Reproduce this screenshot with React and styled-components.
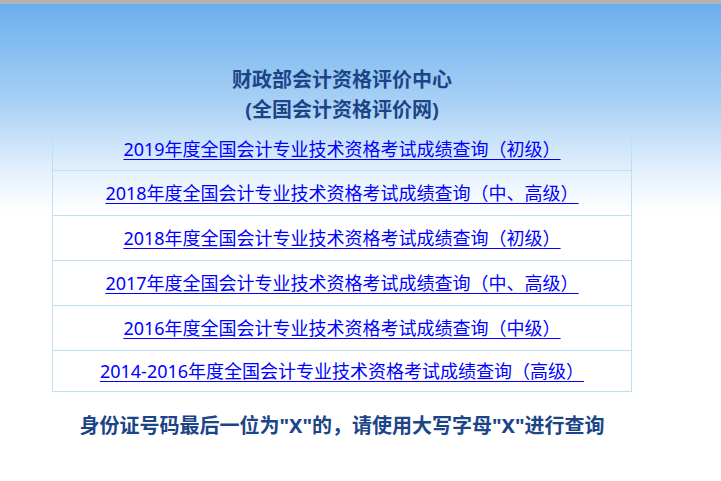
import React from "react";
import styled, { createGlobalStyle } from "styled-components";

const Global = createGlobalStyle`
  html, body { margin: 0; padding: 0; background: #fff; }
  body { font-family: "Noto Sans", "Noto Sans CJK SC", sans-serif; }
`;

const Page = styled.div`
  border-top: 4px solid #b5b3b1;
  min-height: 477px;
  background: linear-gradient(to bottom, #6cafee 0px, #a9d1f5 100px, #e6f2fd 170px, #ffffff 208px) no-repeat;
  background-size: 100% 208px;
  box-sizing: border-box;
`;

const Column = styled.div`
  width: 580px;
  margin-left: 52px;
  padding-top: 61px;
  display: flex;
  flex-direction: column;
  align-items: stretch;
`;

const Title = styled.h1`
  margin: 0;
  font-family: "Noto Sans", "Noto Sans CJK SC", sans-serif;
  font-size: 20px;
  line-height: 30px;
  font-weight: 700;
  color: #1c4587;
  text-align: center;
`;

const Table = styled.div`
  margin-top: 2px;
  border-left: 1px solid #bfe0f2;
  border-right: 1px solid #bfe0f2;
  display: flex;
  flex-direction: column;
`;

const Row = styled.div`
  height: ${(p) => p.$h}px;
  border-bottom: 1px solid #bfe0f2;
  display: flex;
  align-items: center;
  justify-content: center;
`;

const Link = styled.a`
  font-family: "Noto Sans", "Noto Sans CJK SC", sans-serif;
  font-size: 18px;
  line-height: 24px;
  color: #0000ff;
  text-decoration: underline;
  text-underline-offset: 3px;
`;

const Notice = styled.p`
  margin: 19px 0 0;
  font-family: "Noto Sans", "Noto Sans CJK SC", sans-serif;
  font-size: 20px;
  line-height: 30px;
  font-weight: 700;
  color: #1c4587;
  text-align: center;
`;

const links = [
  { t: "2019年度全国会计专业技术资格考试成绩查询（初级）", h: 43 },
  { t: "2018年度全国会计专业技术资格考试成绩查询（中、高级）", h: 44 },
  { t: "2018年度全国会计专业技术资格考试成绩查询（初级）", h: 44 },
  { t: "2017年度全国会计专业技术资格考试成绩查询（中、高级）", h: 44 },
  { t: "2016年度全国会计专业技术资格考试成绩查询（中级）", h: 44 },
  { t: "2014-2016年度全国会计专业技术资格考试成绩查询（高级）", h: 40 },
];

export default function App() {
  return (
    <>
      <Global />
      <Page>
        <Column>
          <Title>
            财政部会计资格评价中心
            <br />
            (全国会计资格评价网)
          </Title>
          <Table>
            {links.map((l, i) => (
              <Row key={i} $h={l.h}>
                <Link href="#">{l.t}</Link>
              </Row>
            ))}
          </Table>
          <Notice>身份证号码最后一位为"X"的，请使用大写字母"X"进行查询</Notice>
        </Column>
      </Page>
    </>
  );
}
